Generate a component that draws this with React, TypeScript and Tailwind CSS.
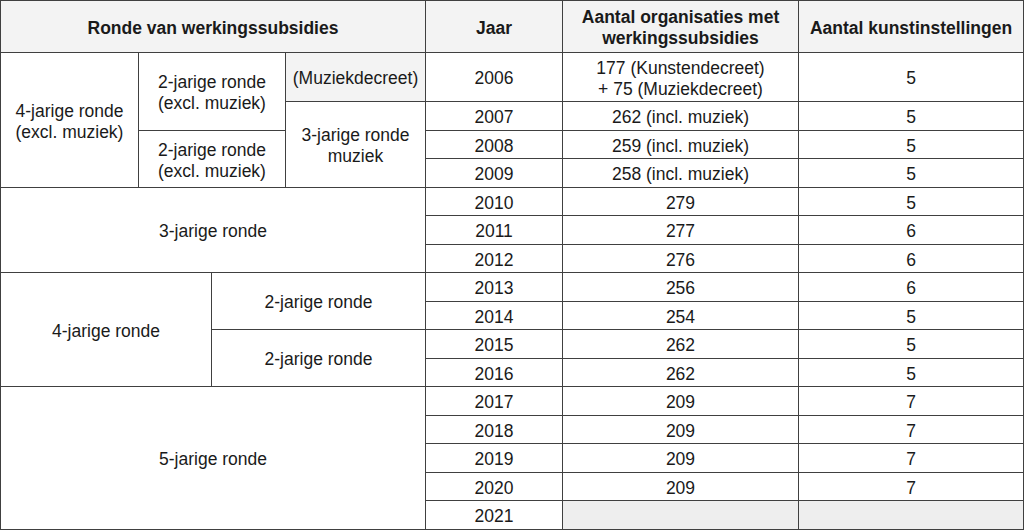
import React from "react";

const cell =
  "flex items-center justify-center text-center border-r border-b border-[#404040] leading-[21px] pt-[3px]";

type Row = { year: string; count?: React.ReactNode; kunst?: string };

const rows: Row[] = [
  { year: "2006", count: (<>177 (Kunstendecreet)<br />+ 75 (Muziekdecreet)</>), kunst: "5" },
  { year: "2007", count: "262 (incl. muziek)", kunst: "5" },
  { year: "2008", count: "259 (incl. muziek)", kunst: "5" },
  { year: "2009", count: "258 (incl. muziek)", kunst: "5" },
  { year: "2010", count: "279", kunst: "5" },
  { year: "2011", count: "277", kunst: "6" },
  { year: "2012", count: "276", kunst: "6" },
  { year: "2013", count: "256", kunst: "6" },
  { year: "2014", count: "254", kunst: "5" },
  { year: "2015", count: "262", kunst: "5" },
  { year: "2016", count: "262", kunst: "5" },
  { year: "2017", count: "209", kunst: "7" },
  { year: "2018", count: "209", kunst: "7" },
  { year: "2019", count: "209", kunst: "7" },
  { year: "2020", count: "209", kunst: "7" },
  { year: "2021" },
];

export default function App() {
  return (
    <div className="w-[1024px] h-[530px] bg-white overflow-hidden">
      <div
        className="grid w-[1024px] border-t border-l border-[#404040] text-[17.5px] text-[#1a1a1a] grid-cols-[138px_73px_74px_140px_137px_236px_225px] grid-rows-[52px_49px_29px_28px_29px_28px_29px_28px_29px_28px_29px_28px_29px_28px_29px_28px_29px]"
        style={{ fontFamily: '"Liberation Sans", Arial, sans-serif' }}
      >
        {/* Header */}
        <div className={`${cell} col-start-1 col-span-4 row-start-1 bg-[#f3f3f3] font-bold`}>
          Ronde van werkingssubsidies
        </div>
        <div className={`${cell} col-start-5 row-start-1 bg-[#f3f3f3] font-bold`}>Jaar</div>
        <div className={`${cell} col-start-6 row-start-1 bg-[#f3f3f3] font-bold`}>
          Aantal organisaties met
          <br />
          werkingssubsidies
        </div>
        <div className={`${cell} col-start-7 row-start-1 bg-[#f3f3f3] font-bold`}>
          Aantal kunstinstellingen
        </div>

        {/* Left groups 2006-2009 */}
        <div className={`${cell} col-start-1 row-start-2 row-span-4`}>
          4-jarige ronde
          <br />
          (excl. muziek)
        </div>
        <div className={`${cell} col-start-2 col-span-2 row-start-2 row-span-2`}>
          2-jarige ronde
          <br />
          (excl. muziek)
        </div>
        <div className={`${cell} col-start-2 col-span-2 row-start-4 row-span-2`}>
          2-jarige ronde
          <br />
          (excl. muziek)
        </div>
        <div className={`${cell} col-start-4 row-start-2 bg-[#f3f3f3]`}>(Muziekdecreet)</div>
        <div className={`${cell} col-start-4 row-start-3 row-span-3`}>
          3-jarige ronde
          <br />
          muziek
        </div>

        {/* 2010-2012 */}
        <div className={`${cell} col-start-1 col-span-4 row-start-6 row-span-3`}>3-jarige ronde</div>

        {/* 2013-2016 */}
        <div className={`${cell} col-start-1 col-span-2 row-start-9 row-span-4`}>4-jarige ronde</div>
        <div className={`${cell} col-start-3 col-span-2 row-start-9 row-span-2`}>2-jarige ronde</div>
        <div className={`${cell} col-start-3 col-span-2 row-start-11 row-span-2`}>2-jarige ronde</div>

        {/* 2017-2021 */}
        <div className={`${cell} col-start-1 col-span-4 row-start-13 row-span-5`}>5-jarige ronde</div>

        {/* Data columns */}
        {rows.map((r, i) => (
          <React.Fragment key={r.year}>
            <div className={`${cell} col-start-5`} style={{ gridRowStart: i + 2 }}>
              {r.year}
            </div>
            <div
              className={`${cell} col-start-6 ${r.count === undefined ? "bg-[#eeeeee]" : ""}`}
              style={{ gridRowStart: i + 2 }}
            >
              {r.count}
            </div>
            <div
              className={`${cell} col-start-7 ${r.kunst === undefined ? "bg-[#eeeeee]" : ""}`}
              style={{ gridRowStart: i + 2 }}
            >
              {r.kunst}
            </div>
          </React.Fragment>
        ))}
      </div>
    </div>
  );
}
